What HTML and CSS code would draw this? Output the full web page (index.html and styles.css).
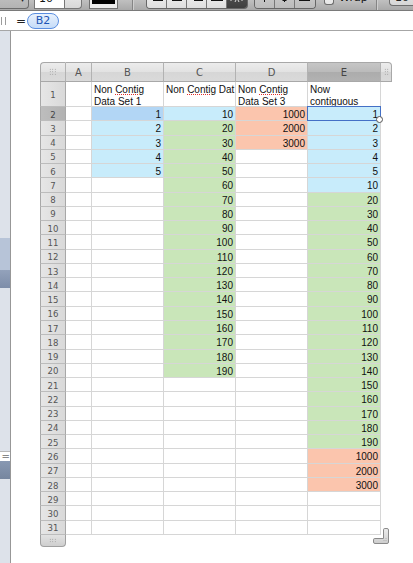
FILE: index.html
```html
<!DOCTYPE html>
<html>
<head>
<meta charset="utf-8">
<link rel="stylesheet" href="styles.css">
</head>
<body>
<div class="toolbar">
  <div class="tb-pop"><span class="arr">▾</span></div>
  <div class="tb-combo"><span class="fld">10</span><span class="stp"></span></div>
  <div class="tb-well"><span></span></div>
  <div class="tb-sep"></div>
  <div class="tb-seg seg1">
    <span><svg width="19" height="9"><path d="M6 1.5H16" stroke="#111"/></svg></span>
    <span><svg width="19" height="9"><path d="M5 1.5H15" stroke="#111"/></svg></span>
    <span><svg width="19" height="9"><path d="M7 1.5H16" stroke="#111"/></svg></span>
    <span><svg width="19" height="9"><path d="M4 1.5H16" stroke="#111"/></svg></span>
    <span class="dk"><svg width="19" height="9"><path d="M4 0V2M15 0V2M8 3L9.5 0M12 3L10.5 0" stroke="#dcdcdc"/></svg></span>
  </div>
  <div class="tb-seg seg2">
    <span><svg width="19" height="9"><path d="M9.5 0V3" stroke="#111"/></svg></span>
    <span><svg width="19" height="9"><path d="M9.5 0V3M7.5 1.5H11.5" stroke="#111"/></svg></span>
    <span><svg width="19" height="9"><path d="M9.5 0V1.5M4 1.5H15" stroke="#111"/></svg></span>
  </div>
  <div class="tb-chk"><span class="box"></span><span class="lbl">Wrap</span></div>
  <div class="tb-sep sep2"></div>
  <div class="tb-btn">10</div>
</div>

<div class="fbar">
  <span class="fgrip"></span>
  <span class="eq">=</span>
  <span class="pill">B2</span>
</div>

<div class="main">
  <div class="side">
    <div class="s-sp1"></div>
    <div class="s-hl1"></div>
    <div class="s-hl2"></div>
    <div class="s-sp2"></div>
    <div class="s-fld">=</div>
    <div class="s-hl3"></div>
  </div>
  <div class="canvas">
    <div class="sheet">
      <div class="ch corner"><i class="dots d33"></i></div>
      <div class="ch">A</div>
      <div class="ch">B</div>
      <div class="ch">C</div>
      <div class="ch">D</div>
      <div class="ch selc">E</div>
      <div class="ch gripR"><i class="dots d24"></i></div>

      <div class="rh">1</div><div class="c t"></div><div class="c t">Non <span class="sp">Contig</span><br>Data Set 1</div><div class="c t nw">Non <span class="sp">Contig</span> Dat</div><div class="c t">Non <span class="sp">Contig</span><br>Data Set 3</div><div class="c t">Now<br>contiguous</div>

      <div class="rh rs">2</div><div class="c"></div><div class="c bs">1</div><div class="c bl">10</div><div class="c sa">1000</div><div class="c bl sel">1</div>
      <div class="rh">3</div><div class="c"></div><div class="c bl">2</div><div class="c gr">20</div><div class="c sa">2000</div><div class="c bl">2</div>
      <div class="rh">4</div><div class="c"></div><div class="c bl">3</div><div class="c gr">30</div><div class="c sa">3000</div><div class="c bl">3</div>
      <div class="rh">5</div><div class="c"></div><div class="c bl">4</div><div class="c gr">40</div><div class="c"></div><div class="c bl">4</div>
      <div class="rh">6</div><div class="c"></div><div class="c bl">5</div><div class="c gr">50</div><div class="c"></div><div class="c bl">5</div>
      <div class="rh">7</div><div class="c"></div><div class="c"></div><div class="c gr">60</div><div class="c"></div><div class="c bl">10</div>
      <div class="rh">8</div><div class="c"></div><div class="c"></div><div class="c gr">70</div><div class="c"></div><div class="c gr">20</div>
      <div class="rh">9</div><div class="c"></div><div class="c"></div><div class="c gr">80</div><div class="c"></div><div class="c gr">30</div>
      <div class="rh">10</div><div class="c"></div><div class="c"></div><div class="c gr">90</div><div class="c"></div><div class="c gr">40</div>
      <div class="rh">11</div><div class="c"></div><div class="c"></div><div class="c gr">100</div><div class="c"></div><div class="c gr">50</div>
      <div class="rh">12</div><div class="c"></div><div class="c"></div><div class="c gr">110</div><div class="c"></div><div class="c gr">60</div>
      <div class="rh">13</div><div class="c"></div><div class="c"></div><div class="c gr">120</div><div class="c"></div><div class="c gr">70</div>
      <div class="rh">14</div><div class="c"></div><div class="c"></div><div class="c gr">130</div><div class="c"></div><div class="c gr">80</div>
      <div class="rh">15</div><div class="c"></div><div class="c"></div><div class="c gr">140</div><div class="c"></div><div class="c gr">90</div>
      <div class="rh">16</div><div class="c"></div><div class="c"></div><div class="c gr">150</div><div class="c"></div><div class="c gr">100</div>
      <div class="rh">17</div><div class="c"></div><div class="c"></div><div class="c gr">160</div><div class="c"></div><div class="c gr">110</div>
      <div class="rh">18</div><div class="c"></div><div class="c"></div><div class="c gr">170</div><div class="c"></div><div class="c gr">120</div>
      <div class="rh">19</div><div class="c"></div><div class="c"></div><div class="c gr">180</div><div class="c"></div><div class="c gr">130</div>
      <div class="rh">20</div><div class="c"></div><div class="c"></div><div class="c gr">190</div><div class="c"></div><div class="c gr">140</div>
      <div class="rh">21</div><div class="c"></div><div class="c"></div><div class="c"></div><div class="c"></div><div class="c gr">150</div>
      <div class="rh">22</div><div class="c"></div><div class="c"></div><div class="c"></div><div class="c"></div><div class="c gr">160</div>
      <div class="rh">23</div><div class="c"></div><div class="c"></div><div class="c"></div><div class="c"></div><div class="c gr">170</div>
      <div class="rh">24</div><div class="c"></div><div class="c"></div><div class="c"></div><div class="c"></div><div class="c gr">180</div>
      <div class="rh">25</div><div class="c"></div><div class="c"></div><div class="c"></div><div class="c"></div><div class="c gr">190</div>
      <div class="rh">26</div><div class="c"></div><div class="c"></div><div class="c"></div><div class="c"></div><div class="c sa">1000</div>
      <div class="rh">27</div><div class="c"></div><div class="c"></div><div class="c"></div><div class="c"></div><div class="c sa">2000</div>
      <div class="rh">28</div><div class="c"></div><div class="c"></div><div class="c"></div><div class="c"></div><div class="c sa">3000</div>
      <div class="rh">29</div><div class="c"></div><div class="c"></div><div class="c"></div><div class="c"></div><div class="c"></div>
      <div class="rh">30</div><div class="c"></div><div class="c"></div><div class="c"></div><div class="c"></div><div class="c"></div>
      <div class="rh">31</div><div class="c"></div><div class="c"></div><div class="c"></div><div class="c"></div><div class="c"></div>

      <div class="rgrip"><i class="dots d32"></i></div>

      <svg class="resize" width="16" height="16" viewBox="0 0 16 16">
        <defs><linearGradient id="rg" x1="0" y1="0" x2="0" y2="1"><stop offset="0" stop-color="#ececec"/><stop offset="1" stop-color="#cdcdcd"/></linearGradient></defs>
        <path d="M10.5 1.8Q10.5 0.5 11.8 0.5H14Q15.5 0.5 15.5 2V14Q15.5 15.5 14 15.5H2Q0.5 15.5 0.5 14V11.8Q0.5 10.5 1.8 10.5H10.5Z" fill="url(#rg)" stroke="#8a8a8a"/>
        <path d="M12.5 12.5h1M12.5 10.5h1M10.5 12.5h1" stroke="#b0b0b0"/>
      </svg>
    </div>
  </div>
</div>
</body>
</html>
```

FILE: styles.css
```css
* { box-sizing: border-box; }
html, body { margin: 0; padding: 0; }
body {
  width: 413px;
  height: 563px;
  overflow: hidden;
  background: #fff;
  font-family: "Liberation Sans", Arial, sans-serif;
}

/* ---------- toolbar (only bottom edge visible) ---------- */
.toolbar {
  display: flex;
  align-items: flex-end;
  height: 11px;
  border-bottom: 1px solid #7a7a7a;
  background: linear-gradient(#c0c0c0, #a9a9a9);
  overflow: hidden;
}
.toolbar > * { flex: none; }
.tb-pop {
  width: 29px;
  height: 22px;
  margin-bottom: 1px;
  border-right: 1px solid #6c6c6c;
  border-bottom: 1px solid #6c6c6c;
  border-radius: 0 0 4px 0;
  background: linear-gradient(#c9c9c9, #b3b3b3);
  display: flex;
  align-items: flex-end;
  justify-content: flex-end;
  padding: 0 3px 5px 0;
  font: 10px "DejaVu Sans", sans-serif;
  line-height: 8px;
  color: #222;
}
.tb-combo { display: flex; margin-left: 5px; height: 22px; margin-bottom: 1px; }
.fld {
  width: 31px;
  background: #fff;
  border: 1px solid #777;
  border-top: 0;
  display: flex;
  align-items: flex-end;
  padding: 0 0 4px 4px;
  font: 11px "DejaVu Sans", sans-serif;
  line-height: 11px;
  color: #111;
}
.stp {
  width: 17px;
  border: 1px solid #777;
  border-left: 0;
  border-top: 0;
  border-radius: 0 0 4px 0;
  background: linear-gradient(#f2f2f2, #d8d8d8);
}
.tb-well {
  margin-left: 7px;
  width: 29px;
  height: 22px;
  margin-bottom: 1px;
  border: 1px solid #707070;
  border-top: 0;
  background: #ececec;
  padding: 0 2px 4px;
}
.tb-well span { display: block; height: 100%; background: #000; }
.tb-sep {
  margin-left: 14px;
  width: 2px;
  height: 11px;
  border-left: 1px solid #858585;
  border-right: 1px solid #cfcfcf;
}
.tb-seg {
  display: flex;
  height: 22px;
  margin-bottom: 1px;
  border: 1px solid #666;
  border-top: 0;
  border-radius: 0 0 4px 4px;
  overflow: hidden;
}
.seg1 { margin-left: 12px; }
.seg2 { margin-left: 6px; }
.tb-seg span {
  width: 20px;
  border-right: 1px solid #777;
  background: linear-gradient(#f6f6f6, #dedede);
  display: flex;
  align-items: flex-end;
}
.tb-seg span:last-child { border-right: 0; }
.seg2 span { background: linear-gradient(#d2d2d2, #bcbcbc); }
.seg1 span.dk { background: linear-gradient(#5c5c5c, #3e3e3e); }
.tb-seg svg { display: block; }
.tb-chk { display: flex; align-items: flex-end; width: 52px; margin-left: 8px; height: 22px; }
.tb-chk .box {
  width: 10px;
  height: 22px;
  margin-bottom: 5px;
  border: 1px solid #6e6e6e;
  border-top: 0;
  border-radius: 0 0 3px 3px;
  background: linear-gradient(#ffffff, #e6e6e6);
}
.tb-chk .lbl {
  margin-left: 5px;
  margin-bottom: 7px;
  font: 11px "DejaVu Sans", sans-serif;
  line-height: 11px;
  color: #111;
}
.sep2 { margin-left: 0; }
.tb-btn {
  margin-left: 11px;
  width: 40px;
  height: 22px;
  margin-bottom: 4px;
  border: 1px solid #6e6e6e;
  border-top: 0;
  border-right: 0;
  border-radius: 0 0 0 4px;
  background: linear-gradient(#f0f0f0, #d6d6d6);
  display: flex;
  align-items: flex-end;
  padding: 0 0 2px 5px;
  font: 11px "DejaVu Sans", sans-serif;
  line-height: 11px;
  color: #222;
}

/* ---------- formula bar ---------- */
.fbar {
  height: 20px;
  border-bottom: 1px solid #a6a6a6;
  display: flex;
  align-items: flex-start;
  background: #fff;
}
.fgrip {
  width: 5px;
  height: 8px;
  margin: 6px 0 0 1px;
  border-left: 1px solid #9c9c9c;
  border-right: 1px solid #9c9c9c;
}
.eq {
  margin: 2px 0 0 10px;
  font: 12px "DejaVu Sans", sans-serif;
  line-height: 16px;
  color: #222;
}
.pill {
  margin: 2px 0 0 1px;
  width: 32px;
  height: 16px;
  border: 1px solid #5a8ee0;
  border-radius: 8px;
  background: linear-gradient(#e8f1fd, #c6dcf8);
  font: 11px "DejaVu Sans", sans-serif;
  line-height: 14px;
  text-align: center;
  color: #1c55b5;
}

/* ---------- main ---------- */
.main { display: flex; height: 532px; }
.side {
  width: 11px;
  flex: none;
  border-right: 1px solid #979797;
  background: #dde2ea;
  display: flex;
  flex-direction: column;
}
.s-sp1 { height: 207px; }
.s-hl1 { height: 32px; background: #b7c4d8; }
.s-hl2 { height: 18px; background: linear-gradient(#93a2bb, #7d8da9); }
.s-sp2 { height: 163px; }
.s-fld {
  height: 10px;
  background: #fff;
  border-top: 1px solid #b8b8b8;
  font: 10px "DejaVu Sans", sans-serif;
  line-height: 9px;
  color: #888;
  text-align: right;
  overflow: hidden;
}
.s-hl3 { height: 18px; background: linear-gradient(#8898b2, #76869f); }

.canvas { flex: 1; padding: 31px 0 0 29px; }

/* ---------- sheet ---------- */
.sheet {
  position: relative;
  display: grid;
  grid-template-columns: 26px 26px 72px 72px 72px 73px 11px;
  grid-template-rows: 20px 25px repeat(30, 14.267px) 12px;
  width: 352px;
}
.ch {
  border-top: 1px solid #a8a8a8;
  border-right: 1px solid #b2b2b2;
  border-bottom: 1px solid #a8a8a8;
  background: linear-gradient(#ececec 0%, #e2e2e2 50%, #d6d6d6 52%, #dadada 100%);
  display: flex;
  align-items: center;
  justify-content: center;
  font: 10px "DejaVu Sans", sans-serif;
  color: #555;
}
.ch.selc { background: linear-gradient(#c6c6c6 0%, #bababa 50%, #acacac 52%, #b2b2b2 100%); color: #444; }
.ch.corner { border-left: 1px solid #a8a8a8; border-top-left-radius: 4px; }
.ch.gripR { border-right: 1px solid #a8a8a8; border-top-right-radius: 4px; }

.dots {
  display: block;
  background-image: radial-gradient(circle, #8f8f8f 0.55px, transparent 0.75px);
  background-size: 2.5px 2.5px;
}
.d33 { width: 7.5px; height: 7.5px; }
.d24 { width: 5px; height: 7.5px; }
.d32 { width: 7.5px; height: 5px; }

.rh {
  grid-column: 1;
  border-left: 1px solid #a8a8a8;
  border-right: 1px solid #a8a8a8;
  border-bottom: 1px solid #bcbcbc;
  background: linear-gradient(to right, #e6e6e6, #d9d9d9);
  display: flex;
  align-items: center;
  justify-content: center;
  padding-top: 1px;
  font: 9.5px "DejaVu Sans Condensed", "DejaVu Sans", sans-serif;
  font-stretch: condensed;
  color: #555;
}
.rh.rs { background: linear-gradient(to right, #bdbdbd, #b2b2b2); color: #444; }

.c {
  border-right: 1px solid #d6d6d6;
  border-bottom: 1px solid #d6d6d6;
  padding: 1px 2px 0 0;
  font-size: 10px;
  line-height: 14.267px;
  text-align: right;
  color: #111;
  white-space: nowrap;
}
.c.t {
  text-align: left;
  padding: 2px 0 0 2px;
  line-height: 11.5px;
}
.c.nw { overflow: hidden; }
.sp {
  text-decoration: underline dotted #e0302a;
  text-decoration-thickness: 1px;
  text-underline-offset: 1px;
}
.bl { background: #c8ecfb; }
.bs { background: #b2d6f5; }
.gr { background: #c9e6b9; }
.sa { background: #fbc5ad; }

.sel { position: relative; }
.sel::before {
  content: "";
  position: absolute;
  left: -1px;
  top: -1px;
  right: -1px;
  bottom: -1px;
  border: 1px solid #4470c6;
}
.sel::after {
  content: "";
  position: absolute;
  right: -3px;
  bottom: -3px;
  width: 5px;
  height: 5px;
  border: 1px solid #555;
  border-radius: 50%;
  background: #fff;
}

.rgrip {
  grid-column: 1;
  border: 1px solid #a0a0a0;
  border-top: 0;
  border-radius: 0 0 4px 4px;
  background: linear-gradient(#e2e2e2, #cfcfcf);
  display: flex;
  align-items: center;
  justify-content: center;
}

.resize {
  position: absolute;
  left: 333px;
  top: 466px;
  display: block;
}
```
